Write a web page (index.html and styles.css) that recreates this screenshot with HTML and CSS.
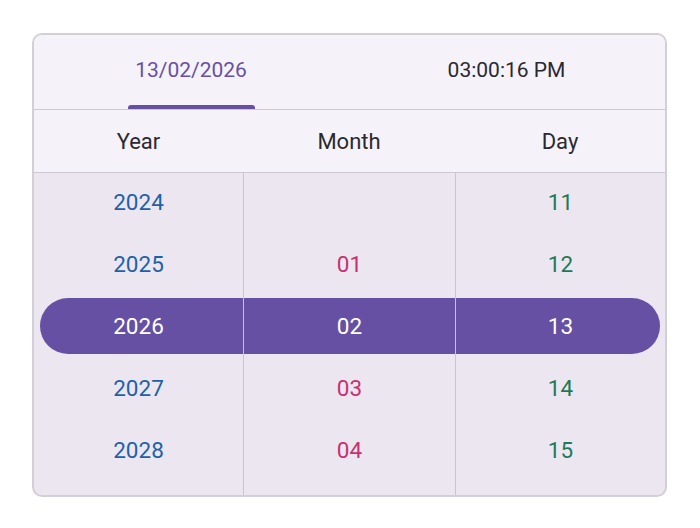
FILE: index.html
```html
<!DOCTYPE html>
<html>
<head>
<meta charset="utf-8">
<link rel="stylesheet" href="styles.css">
</head>
<body>
<div class="card">
  <div class="tabs">
    <div class="tab active"><span class="tab-label">13/02/2026</span><span class="indicator"></span></div>
    <div class="tab"><span class="tab-label">03:00:16 PM</span></div>
  </div>
  <div class="heads">
    <div class="head">Year</div>
    <div class="head">Month</div>
    <div class="head">Day</div>
  </div>
  <div class="wheel">
    <div class="band"></div>
    <div class="col year">
      <div class="cell">2024</div>
      <div class="cell">2025</div>
      <div class="cell sel">2026</div>
      <div class="cell">2027</div>
      <div class="cell">2028</div>
    </div>
    <div class="col month">
      <div class="cell"></div>
      <div class="cell">01</div>
      <div class="cell sel">02</div>
      <div class="cell">03</div>
      <div class="cell">04</div>
    </div>
    <div class="col day">
      <div class="cell">11</div>
      <div class="cell">12</div>
      <div class="cell sel">13</div>
      <div class="cell">14</div>
      <div class="cell">15</div>
    </div>
  </div>
</div>
</body>
</html>
```
FILE: styles.css
```css
html, body {
  margin: 0;
  padding: 0;
  background: #ffffff;
  font-family: Roboto, "Noto Sans", sans-serif;
}
body {
  padding: 33px 33px 0 32px;
}
.card {
  width: 631px;
  height: 460px;
  border: 2px solid #d3cfd8;
  border-radius: 10px;
  overflow: hidden;
  background: #ece6f0;
  display: flex;
  flex-direction: column;
}
.tabs {
  display: grid;
  grid-template-columns: 314px 1fr;
  height: 74px;
  background: #f6f2f9;
  border-bottom: 1px solid #cdc8d2;
}
.tab {
  display: flex;
  flex-direction: column;
  align-items: center;
  justify-content: flex-end;
  font-size: 21px;
  color: #2a2830;
}
.tab-label {
  line-height: 24px;
  margin-bottom: 27px;
}
.tab.active .tab-label {
  color: #6750a4;
  margin-bottom: 23px;
}
.indicator {
  display: block;
  width: 127px;
  height: 4px;
  border-radius: 3px 3px 0 0;
  background: #6750a4;
  margin-bottom: 0;
}
.heads {
  display: grid;
  grid-template-columns: 209px 212px 1fr;
  height: 62px;
  background: #f6f2f9;
  border-bottom: 1px solid #cdc8d2;
}
.head {
  display: flex;
  align-items: center;
  justify-content: center;
  font-size: 22px;
  color: #2b2930;
}
.wheel {
  position: relative;
  flex: 1;
  display: grid;
  grid-template-columns: 209px 212px 1fr;
}
.band {
  position: absolute;
  left: 6px;
  right: 5px;
  top: 125px;
  height: 56px;
  border-radius: 28px;
  background: #6650a4;
}
.col {
  position: relative;
  display: flex;
  flex-direction: column;
}
.col + .col {
  border-left: 1px solid #cbc5d1;
}
.cell {
  height: 62px;
  display: flex;
  align-items: center;
  justify-content: center;
  font-size: 22.5px;
  padding-bottom: 5px;
  box-sizing: border-box;
}
.year .cell { color: #1d62a8; }
.month .cell { color: #c8306f; }
.day .cell { color: #1d7a55; }
.col .cell.sel { color: #ffffff; }
```
